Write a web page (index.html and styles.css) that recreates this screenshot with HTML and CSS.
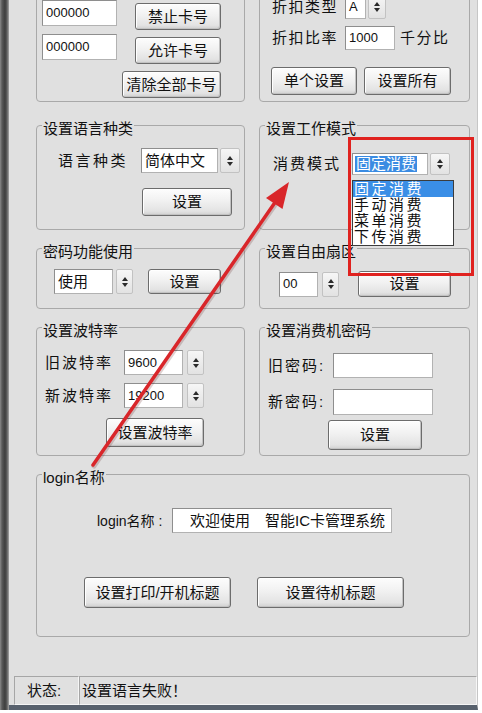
FILE: index.html
```html
<!DOCTYPE html>
<html lang="zh-CN">
<head>
  <meta charset="UTF-8" />
  <title>系统参数设置</title>
  <link rel="stylesheet" href="styles.css">
</head>
<body>

<div class="window">
  <div class="frame-left"></div>
  <div class="client">

    <div class="panel">

      <!-- 卡号 -->
      <fieldset class="grp grp-card">
        <div class="inner card-grid">
          <div class="edit num">000000</div>
          <button class="btn">禁止卡号</button>
          <div class="edit num">000000</div>
          <button class="btn">允许卡号</button>
          <button class="btn btn-clear">清除全部卡号</button>
        </div>
      </fieldset>

      <!-- 折扣 -->
      <fieldset class="grp grp-discount">
        <div class="inner">
          <div class="row">
            <span class="lbl">折扣类型</span>
            <div class="edit num sel-a">A</div>
            <span class="spin"><svg viewBox="0 0 6 10" width="6" height="10"><path d="M3 0L6 4H0z M0 6H6L3 10z"/></svg></span>
          </div>
          <div class="row r2">
            <span class="lbl">折扣比率</span>
            <div class="edit num rate">1000</div>
            <span class="unit">千分比</span>
          </div>
          <div class="row r3">
            <button class="btn">单个设置</button>
            <button class="btn">设置所有</button>
          </div>
        </div>
      </fieldset>

      <!-- 语言 -->
      <fieldset class="grp grp-lang">
        <legend>设置语言种类</legend>
        <div class="inner">
          <div class="row">
            <span class="lbl">语言种类</span>
            <div class="edit">简体中文</div>
            <span class="spin"><svg viewBox="0 0 6 10" width="6" height="10"><path d="M3 0L6 4H0z M0 6H6L3 10z"/></svg></span>
          </div>
          <button class="btn">设置</button>
        </div>
      </fieldset>

      <!-- 工作模式 -->
      <fieldset class="grp grp-mode">
        <legend>设置工作模式</legend>
        <div class="inner">
          <div class="row">
            <span class="lbl">消费模式</span>
            <div class="combo">
              <div class="edit"><span class="picked">固定消费</span></div>
              <span class="spin"><svg viewBox="0 0 6 10" width="6" height="10"><path d="M3 0L6 4H0z M0 6H6L3 10z"/></svg></span>
              <ul class="droplist">
                <li class="on">固定消费</li>
                <li>手动消费</li>
                <li>菜单消费</li>
                <li>下传消费</li>
              </ul>
            </div>
          </div>
        </div>
      </fieldset>

      <!-- 密码功能 -->
      <fieldset class="grp grp-pwd">
        <legend>密码功能使用</legend>
        <div class="inner row">
          <div class="edit">使用</div>
          <span class="spin"><svg viewBox="0 0 6 10" width="6" height="10"><path d="M3 0L6 4H0z M0 6H6L3 10z"/></svg></span>
          <button class="btn">设置</button>
        </div>
      </fieldset>

      <!-- 扇区 -->
      <fieldset class="grp grp-sector">
        <legend>设置自由扇区</legend>
        <div class="inner row">
          <div class="edit num">00</div>
          <span class="spin"><svg viewBox="0 0 6 10" width="6" height="10"><path d="M3 0L6 4H0z M0 6H6L3 10z"/></svg></span>
          <button class="btn">设置</button>
        </div>
      </fieldset>

      <!-- 波特率 -->
      <fieldset class="grp grp-baud">
        <legend>设置波特率</legend>
        <div class="inner">
          <div class="row">
            <span class="lbl">旧波特率</span>
            <div class="edit num">9600</div>
            <span class="spin"><svg viewBox="0 0 6 10" width="6" height="10"><path d="M3 0L6 4H0z M0 6H6L3 10z"/></svg></span>
          </div>
          <div class="row r2">
            <span class="lbl">新波特率</span>
            <div class="edit num">19200</div>
            <span class="spin"><svg viewBox="0 0 6 10" width="6" height="10"><path d="M3 0L6 4H0z M0 6H6L3 10z"/></svg></span>
          </div>
          <button class="btn">设置波特率</button>
        </div>
      </fieldset>

      <!-- 消费机密码 -->
      <fieldset class="grp grp-cpwd">
        <legend>设置消费机密码</legend>
        <div class="inner">
          <div class="row">
            <span class="lbl">旧密码:</span>
            <div class="edit"></div>
          </div>
          <div class="row r2">
            <span class="lbl">新密码:</span>
            <div class="edit"></div>
          </div>
          <button class="btn">设置</button>
        </div>
      </fieldset>

      <!-- login -->
      <fieldset class="grp grp-login">
        <legend>login名称</legend>
        <div class="inner">
          <div class="row r1">
            <span class="lbl">login名称 :</span>
            <div class="edit">欢迎使用　智能IC卡管理系统</div>
          </div>
          <div class="row r2">
            <button class="btn">设置打印/开机标题</button>
            <button class="btn">设置待机标题</button>
          </div>
        </div>
      </fieldset>

    </div>

    <div class="status">
      <div class="cell cell-label">状态:</div>
      <div class="cell cell-msg">设置语言失败！</div>
    </div>

  </div>
</div>

<div class="mark"></div>

<svg class="arrow" width="482" height="713" viewBox="0 0 482 713">
  <line x1="94" y1="466" x2="277" y2="202" stroke="rgba(80,0,0,0.18)" stroke-width="5" stroke-linecap="round" />
  <line x1="93" y1="465" x2="276" y2="201" stroke="#d9262a" stroke-width="3.5" stroke-linecap="round" />
  <polygon points="289,182 282.5,209 266,198" fill="#d9262a" />
</svg>

</body>
</html>
```

FILE: styles.css
```css
html, body {
  margin: 0; padding: 0;
}

body {
  position: relative;
  width: 482px; height: 713px;
  overflow: hidden;
  background: #fff;
  font-family: "Liberation Sans", "Noto Sans CJK SC", sans-serif;
  font-size: 15px;
  line-height: 18px;
  color: #111;
}

.window {
  display: flex;
  width: 478px; height: 710px;
}

.frame-left {
  width: 9px;
  background: linear-gradient(to right, #8a8a8a, #5a5a5a 2px, #3e3e3e 5px, #5e5e5e 7px, #a6a6a6 9px);
}

.client {
  flex: 1;
  display: flex;
  flex-direction: column;
  background: #e0e0e0;
  border-right: 1px solid #c6c6c6;
  border-bottom: 5px solid #58616d;
  overflow: hidden;
}

.panel {
  display: grid;
  grid-template-columns: 209px 211px;
  column-gap: 14px;
  row-gap: 8px;
  margin: -38px 0 0 27px;
}

/* group box */
.grp {
  box-sizing: border-box;
  margin: 0; padding: 0;
  min-width: 0;
  border: 1px solid #a9a9a9;
  border-radius: 4px;
}

.grp legend {
  margin-left: 5px;
  padding: 6px 1px 0;
  line-height: 15px;
  font-size: 15px;
}

.row {
  display: flex;
  align-items: center;
}

.lbl {
  flex: none;
  white-space: nowrap;
}

/* controls */
.edit {
  box-sizing: border-box;
  display: flex; align-items: center;
  height: 25px;
  padding-left: 3px;
  background: #fff;
  border: 1px solid #b2b2b2;
  border-top-color: #8e8e8e;
  border-left-color: #8e8e8e;
  white-space: nowrap;
  flex: none;
}

.edit.num { font-size: 13px; }

.spin {
  box-sizing: border-box;
  display: flex; align-items: center; justify-content: center;
  width: 17px; height: 25px;
  margin-left: 3px;
  background: linear-gradient(#f6f6f6, #e2e2e2);
  border: 1px solid #c2c2c2;
  border-radius: 2px;
  flex: none;
}

.spin svg { fill: #2a2a2a; }

.btn {
  box-sizing: border-box;
  display: flex; align-items: center; justify-content: center;
  padding: 0;
  font: inherit;
  line-height: 18px;
  color: #111;
  white-space: nowrap;
  border: 1px solid #6c6c6c;
  border-radius: 3px;
  background: linear-gradient(#fdfdfd, #f1f1f1 45%, #e3e3e3 85%, #d0d0d0);
  box-shadow: inset 1px 1px 0 #fff, inset -1px -1px 0 #c2c2c2;
  flex: none;
}

/* 卡号 */
.grp-card {
  height: 140px;
  margin-bottom: 5px;
  padding-top: 37px;
}

.card-grid {
  display: grid;
  grid-template-columns: 75px 86px;
  column-gap: 18px;
  row-gap: 4px;
  padding-left: 5px;
}

.card-grid .edit { height: 26px; }
.card-grid .btn { height: 27px; margin-top: 3px; }

.btn-clear {
  grid-column: 1 / -1;
  justify-self: end;
  width: 99px;
}

/* 折扣 */
.grp-discount {
  height: 140px;
  margin-bottom: 5px;
  padding-top: 32px;
}

.grp-discount .inner { padding-left: 12px; }
.grp-discount .lbl { width: 73px; letter-spacing: 1.5px; }
.grp-discount .edit { height: 24px; }
.grp-discount .spin { width: 18px; height: 24px; margin-left: 2px; }
.sel-a { width: 21px; }
.rate { width: 50px; }
.unit { margin-left: 5px; letter-spacing: 1.5px; }
.grp-discount .r2 { margin-top: 7px; }
.grp-discount .r3 { margin-top: 17px; margin-left: -1px; }
.grp-discount .r3 .btn { width: 86px; height: 28px; }
.grp-discount .r3 .btn + .btn { width: 87px; margin-left: 7px; }

/* 语言 */
.grp-lang {
  height: 115px;
  padding-top: 12px;
}

.grp-lang .inner { padding-left: 21px; }
.grp-lang .lbl { width: 83px; letter-spacing: 2.5px; }
.grp-lang .edit { width: 77px; }
.grp-lang .spin { width: 20px; margin-left: 2px; }
.grp-lang .btn { width: 90px; height: 28px; margin: 15px 0 0 84px; }

/* 工作模式 */
.grp-mode {
  height: 115px;
  padding-top: 17px;
}

.grp-mode .inner { padding-left: 13px; }
.grp-mode .lbl { width: 79px; letter-spacing: 2px; }

.combo {
  position: relative;
  display: flex;
}

.combo .edit { width: 76px; height: 22px; padding-left: 2px; }
.combo .spin { width: 20px; height: 22px; margin-left: 2px; }

.picked {
  background: #3a8be2;
  color: #fff;
  line-height: 16px;
  padding: 0 1px;
}

.droplist {
  position: absolute;
  top: 27px; left: 0;
  width: 100px;
  margin: 0; padding: 0;
  list-style: none;
  background: #fff;
  border: 1px solid #3c3c3c;
  z-index: 2;
}

.droplist li {
  height: 16px;
  line-height: 16px;
  padding-left: 1px;
  letter-spacing: 2.5px;
}

.droplist li.on { background: #3a8ee6; color: #fff; }

/* 密码功能 */
.grp-pwd {
  height: 71px;
  padding-top: 10px;
}

.grp-pwd .inner { padding-left: 17px; }
.grp-pwd .edit { width: 59px; }
.grp-pwd .btn { width: 73px; height: 25px; margin-left: 15px; }

/* 扇区 */
.grp-sector {
  height: 71px;
  padding-top: 12px;
}

.grp-sector .inner { padding-left: 19px; }
.grp-sector .edit { width: 39px; }
.grp-sector .spin { margin-left: 4px; }
.grp-sector .btn { width: 93px; height: 26px; margin-left: 19px; }

/* 波特率 */
.grp-baud {
  height: 139px;
  padding-top: 12px;
}

.grp-baud .inner { padding-left: 8px; }
.grp-baud .lbl { width: 79px; letter-spacing: 2px; }
.grp-baud .edit { width: 59px; }
.grp-baud .spin { margin-left: 4px; }
.grp-baud .r2 { margin-top: 8px; }
.grp-baud .btn { width: 98px; height: 29px; margin: 10px 0 0 61px; }

/* 消费机密码 */
.grp-cpwd {
  height: 139px;
  padding-top: 15px;
}

.grp-cpwd .inner { padding-left: 8px; }
.grp-cpwd .lbl { width: 65px; letter-spacing: 2px; }
.grp-cpwd .edit { width: 100px; }
.grp-cpwd .r2 { margin-top: 11px; }
.grp-cpwd .r2 .edit { height: 26px; }
.grp-cpwd .btn { width: 94px; height: 30px; margin: 5px 0 0 60px; }

/* login */
.grp-login {
  grid-column: 1 / -1;
  height: 173px;
  padding-top: 23px;
}

.grp-login .inner { padding-left: 47px; }
.grp-login .r1 { margin-left: 13px; }
.grp-login .lbl { width: 75px; font-size: 14px; }
.grp-login .edit { width: 220px; padding-left: 17px; }
.grp-login .r2 { margin-top: 44px; }
.grp-login .r2 .btn { width: 147px; height: 31px; }
.grp-login .r2 .btn + .btn { margin-left: 26px; }

/* 状态栏 */
.status {
  display: flex;
  height: 29px;
  margin: 39px 0 0 5px;
}

.cell {
  box-sizing: border-box;
  display: flex; align-items: center;
  border: 1px solid;
  border-color: #a6a6a6 #f6f6f6 #f6f6f6 #a6a6a6;
}

.cell-label { width: 65px; padding-left: 12px; }
.cell-msg { flex: 1; padding-left: 2px; }

/* 标注 */
.mark {
  position: absolute;
  left: 348px; top: 137px;
  width: 126px; height: 139px;
  box-sizing: border-box;
  border: 3px solid #e0221f;
  z-index: 5;
}

.arrow {
  position: absolute;
  left: 0; top: 0;
  pointer-events: none;
  z-index: 6;
}
```
